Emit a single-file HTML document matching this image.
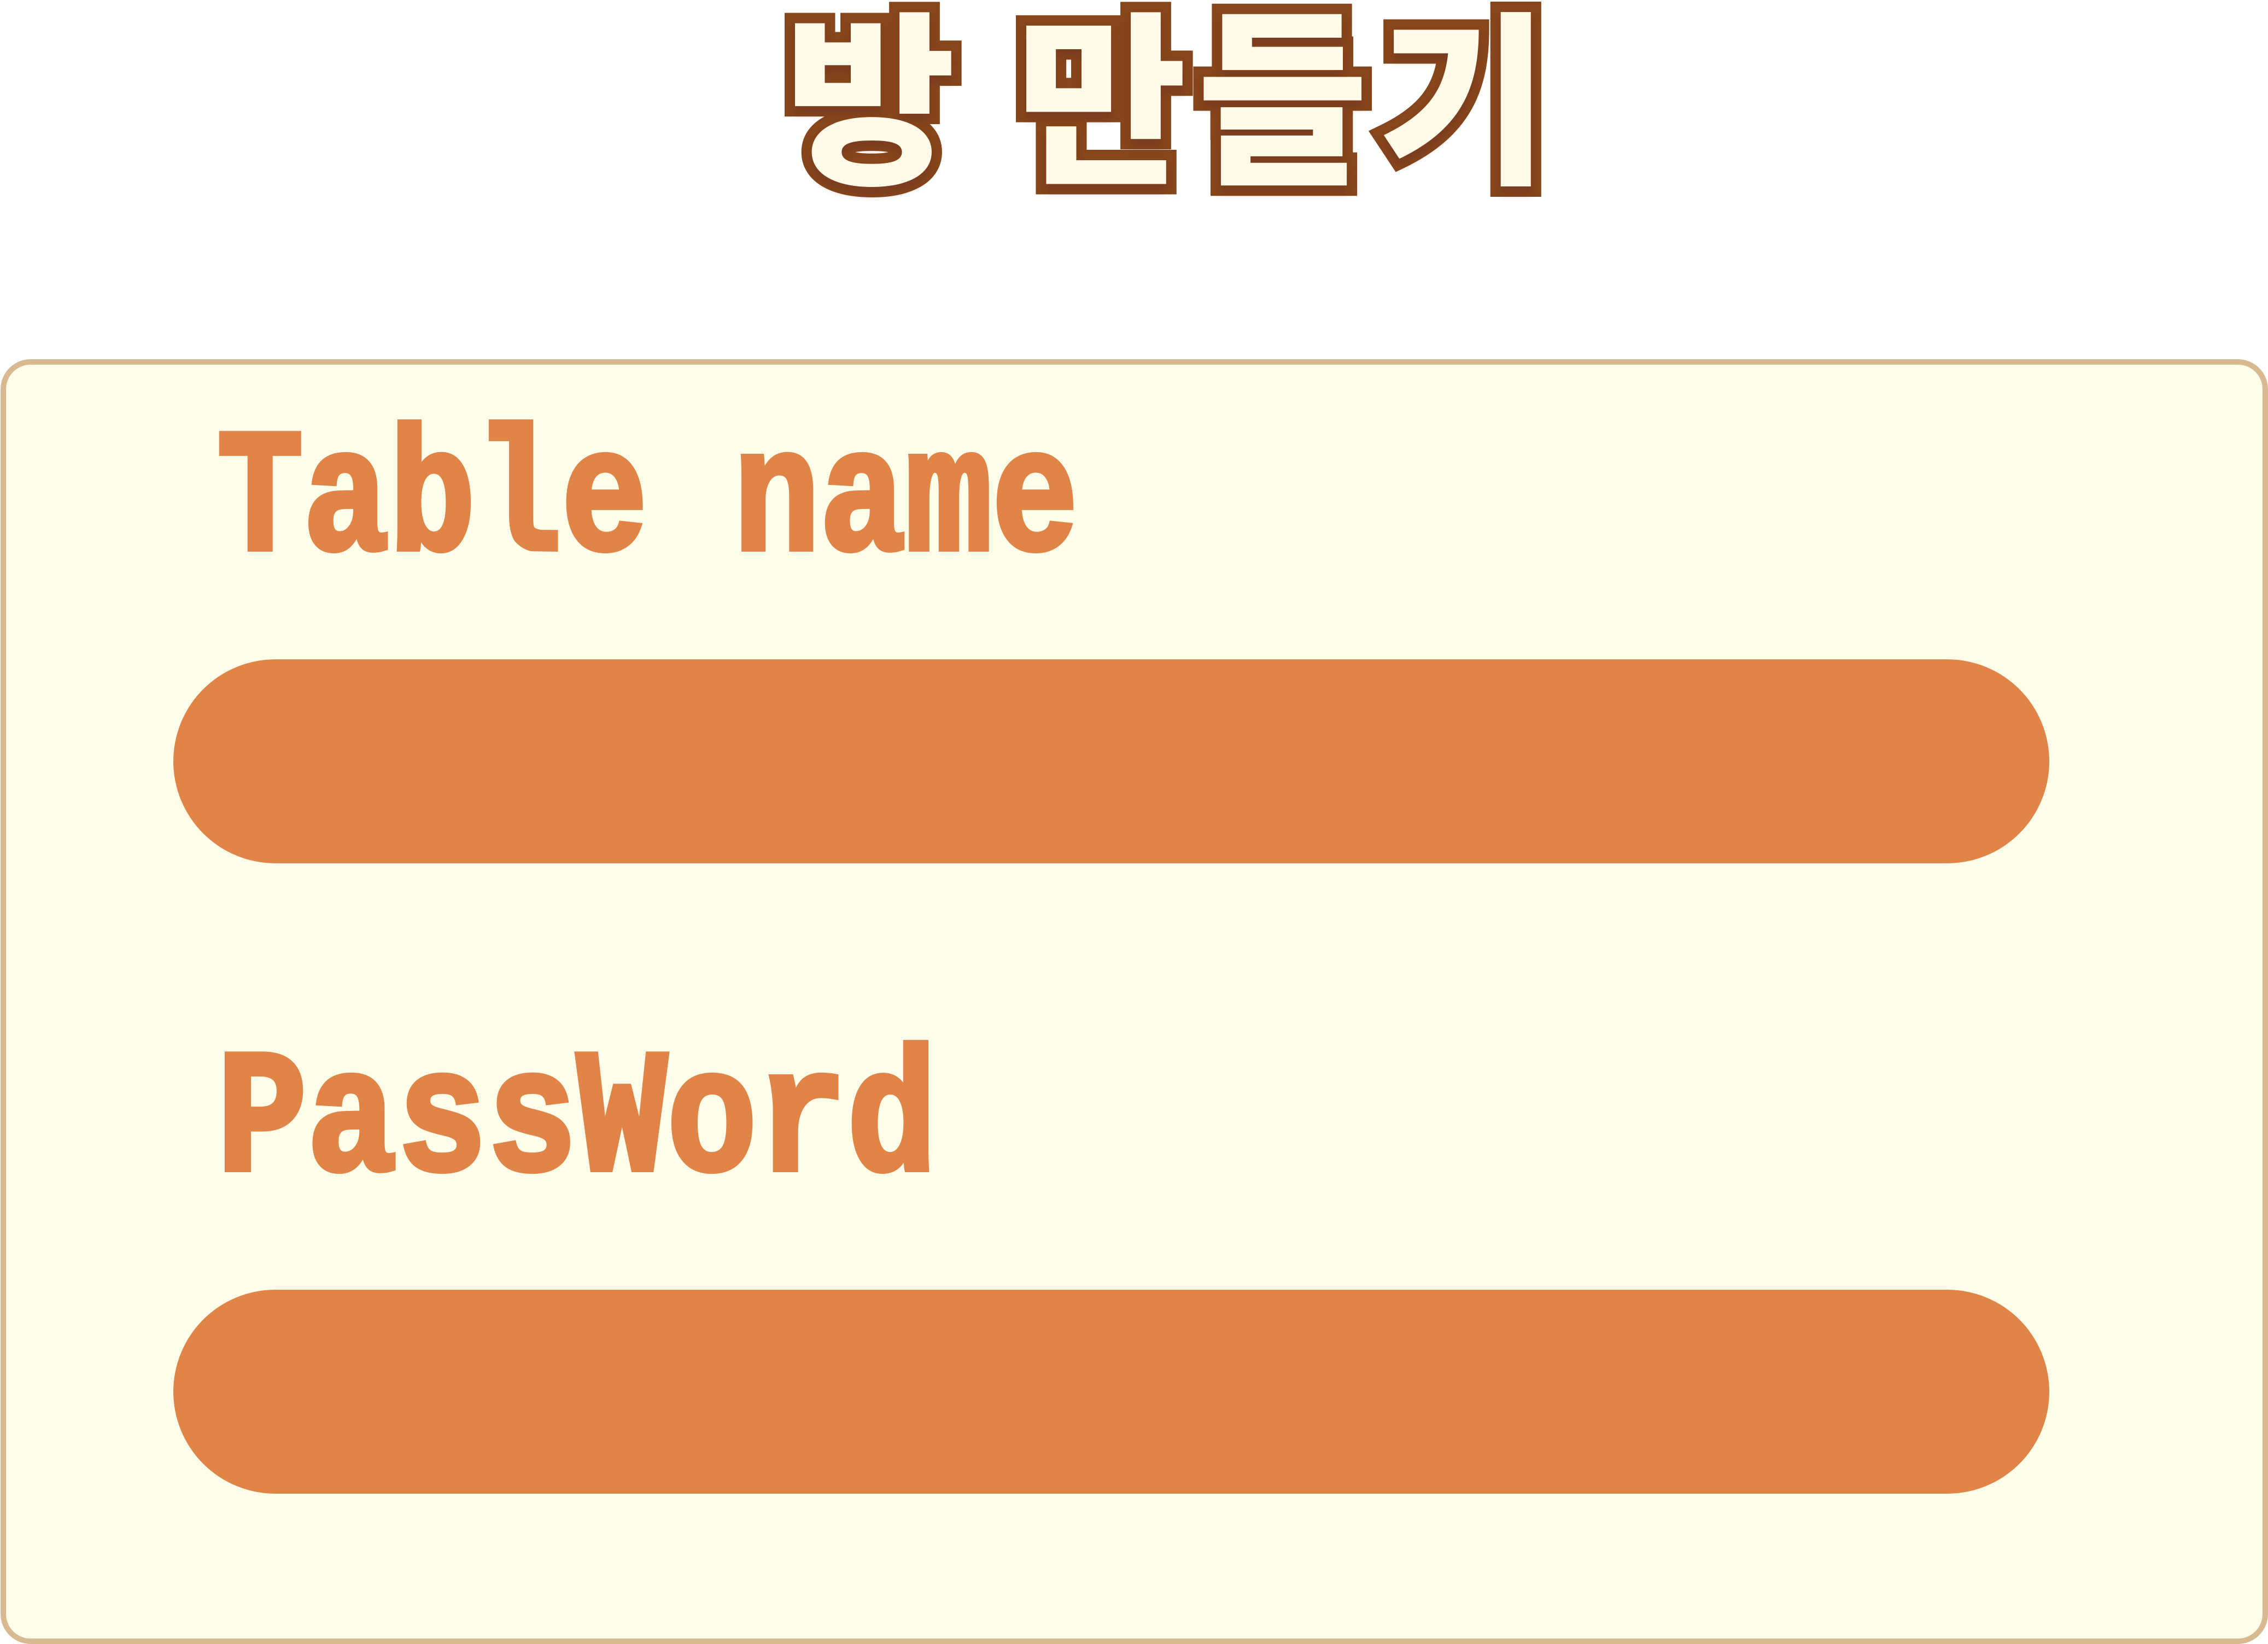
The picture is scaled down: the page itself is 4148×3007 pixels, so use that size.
<!DOCTYPE html>
<html><head><meta charset="utf-8"><style>
html,body{margin:0;padding:0;background:#fff;}
body{width:4148px;height:3003px;position:relative;overflow:hidden;}
.t{position:absolute;top:22px;font-family:"Liberation Sans","Noto Sans CJK KR",sans-serif;font-weight:900;font-size:340px;line-height:340px;color:#fffbe8;-webkit-text-stroke:38px #86451a;paint-order:stroke fill;text-shadow:0 14px 12px rgba(110,50,40,.45);white-space:pre;}
.card{position:absolute;left:1px;top:657px;width:4127px;height:2330px;background:#fefde9;border:10px solid #d8b990;border-radius:55px;}
.lbl{position:absolute;left:397px;font-family:"Liberation Mono",monospace;font-weight:bold;font-size:320px;line-height:320px;color:#e08447;-webkit-text-stroke:10px #e08447;transform-origin:0 0;white-space:pre;}
.inp{position:absolute;left:317px;width:3431px;height:373px;background:#e08447;border-radius:187px;}
</style></head><body>
<div class="t" style="left:1435px;">방</div>
<div class="t" style="left:1858px;letter-spacing:18px;">만들기</div>
<div class="card"></div>
<div class="lbl" style="top:760px;transform:scaleX(0.82)">Table name</div>
<div class="inp" style="top:1206px"></div>
<div class="lbl" style="top:1895px;transform:scaleX(0.857)">PassWord</div>
<div class="inp" style="top:2359px"></div>
</body></html>
